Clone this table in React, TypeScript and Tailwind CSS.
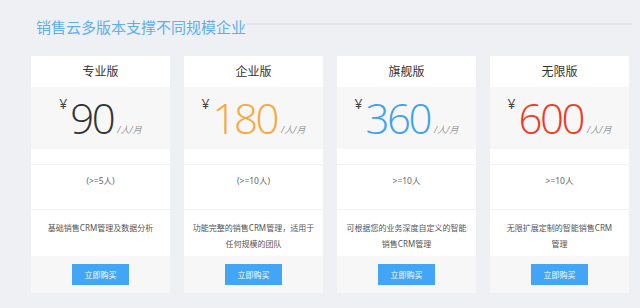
const plans = [
  { name: "专业版", price: "90", color: "text-[#333333]", users: "(>=5人)", desc: ["基础销售CRM管理及数据分析"] },
  { name: "企业版", price: "180", color: "text-[#f7a93b]", users: "(>=10人)", desc: ["功能完整的销售CRM管理，适用于", "任何规模的团队"] },
  { name: "旗舰版", price: "360", color: "text-[#3ea2f0]", users: ">=10人", desc: ["可根据您的业务深度自定义的智能", "销售CRM管理"] },
  { name: "无限版", price: "600", color: "text-[#ee3b25]", users: ">=10人", desc: ["无限扩展定制的智能销售CRM", "管理"] },
];

export default function App() {
  return (
    <div className="w-[640px] h-[308px] bg-[#eff0f4] overflow-hidden font-['Noto_Sans','Noto_Sans_CJK_SC',sans-serif]">
      <div className="flex items-center pl-[36px] pr-[8px] pt-[15px] h-[40px]">
        <h1 className="text-[15px] leading-none text-[#5eaef0] whitespace-nowrap">销售云多版本支撑不同规模企业</h1>
        <div className="flex-1 h-[2px] bg-[#e4e6eb] mb-[8px]" />
      </div>
      <div className="flex gap-[14px] pl-[31px] pt-[16px]">
        {plans.map((p) => (
          <div key={p.name} className="w-[139px] bg-white flex flex-col">
            <div className="h-[31px] flex items-center justify-center text-[12px] text-[#333]">{p.name}</div>
            <div className="h-[62px] bg-[#f7f7f7] flex items-end justify-center pb-[10px]">
              <span className="self-start mt-[6px] mr-[3px] text-[14px] text-[#444]">¥</span>
              <span className={`font-['Open_Sans',sans-serif] font-[350] tracking-[-2.5px] text-[42px] leading-[42px] ${p.color}`}>{p.price}</span>
              <span className="ml-[4px] mb-[3px] text-[9px] italic text-[#999]">/人/月</span>
            </div>
            <div className="h-[16px] border-b border-[#f2f2f2]" />
            <div className="h-[45px] border-b border-[#f2f2f2] pt-[10px] text-center text-[8.5px] text-[#666]">{p.users}</div>
            <div className="h-[46px] pt-[10px] text-center text-[8px] leading-[16px] text-[#555]">
              {p.desc.map((d) => (
                <div key={d}>{d}</div>
              ))}
            </div>
            <div className="h-[37px] bg-[#f7f7f7] flex items-center justify-center">
              <button className="w-[57px] h-[21px] bg-[#42a5f5] text-white text-[8px]">立即购买</button>
            </div>
          </div>
        ))}
      </div>
    </div>
  );
}
